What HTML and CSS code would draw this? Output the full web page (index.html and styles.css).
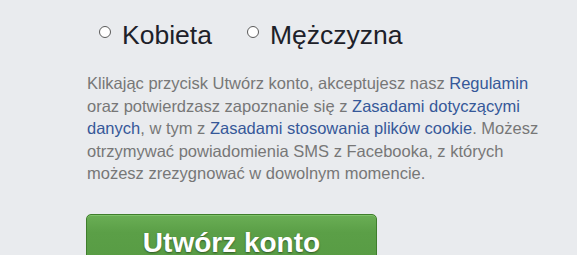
FILE: index.html
```html
<!DOCTYPE html>
<html lang="pl">
<head>
<meta charset="utf-8">
<link rel="stylesheet" href="styles.css">
</head>
<body>
<div class="form">
  <div class="genders">
    <label class="gender"><span class="radio"></span><span class="label">Kobieta</span></label>
    <label class="gender"><span class="radio"></span><span class="label">Mężczyzna</span></label>
  </div>
  <p class="terms">Klikając przycisk Utwórz konto, akceptujesz nasz <a href="#">Regulamin</a> oraz potwierdzasz zapoznanie się z <a href="#">Zasadami dotyczącymi danych</a>, w tym z <a href="#">Zasadami stosowania plików cookie</a>. Możesz otrzymywać powiadomienia SMS z Facebooka, z których możesz zrezygnować w dowolnym momencie.</p>
  <button class="submit">Utwórz konto</button>
</div>
</body>
</html>
```
FILE: styles.css
```css
html, body {
  margin: 0;
  padding: 0;
  background: #e9ebee;
  height: 100%;
  overflow: hidden;
}
.form {
  padding: 20px 0 0 86px;
  font-family: "Liberation Sans", Arial, sans-serif;
}
.genders {
  display: flex;
  align-items: center;
  gap: 35px;
  margin-left: 13px;
  font-size: 26.5px;
  line-height: 30px;
  color: #1d2129;
}
.gender {
  display: flex;
  align-items: center;
  gap: 11px;
}
.radio {
  width: 10px;
  height: 10px;
  border: 1px solid #5a5a5a;
  border-radius: 50%;
  background: #fff;
  margin-top: -6px;
}
.terms {
  margin: 22px 0 0 1px;
  width: 452px;
  font-size: 16.5px;
  line-height: 22.5px;
  color: #777;
}
.terms a {
  color: #365899;
  text-decoration: none;
}
.submit {
  display: flex;
  justify-content: center;
  align-items: flex-start;
  margin-top: 29px;
  width: 291px;
  height: 60px;
  padding: 10px 0 0;
  border: 1px solid #3f7e2c;
  border-radius: 5px;
  background: linear-gradient(#6aae55, #5b9f47 30%, #569a43);
  box-shadow: inset 0 1px 0 #7fc26a;
  color: #fff;
  font-family: "Liberation Sans", Arial, sans-serif;
  font-weight: bold;
  font-size: 28px;
  line-height: 36px;
  text-shadow: 0 1px 2px rgba(0, 0, 0, 0.45);
  cursor: pointer;
}
```
